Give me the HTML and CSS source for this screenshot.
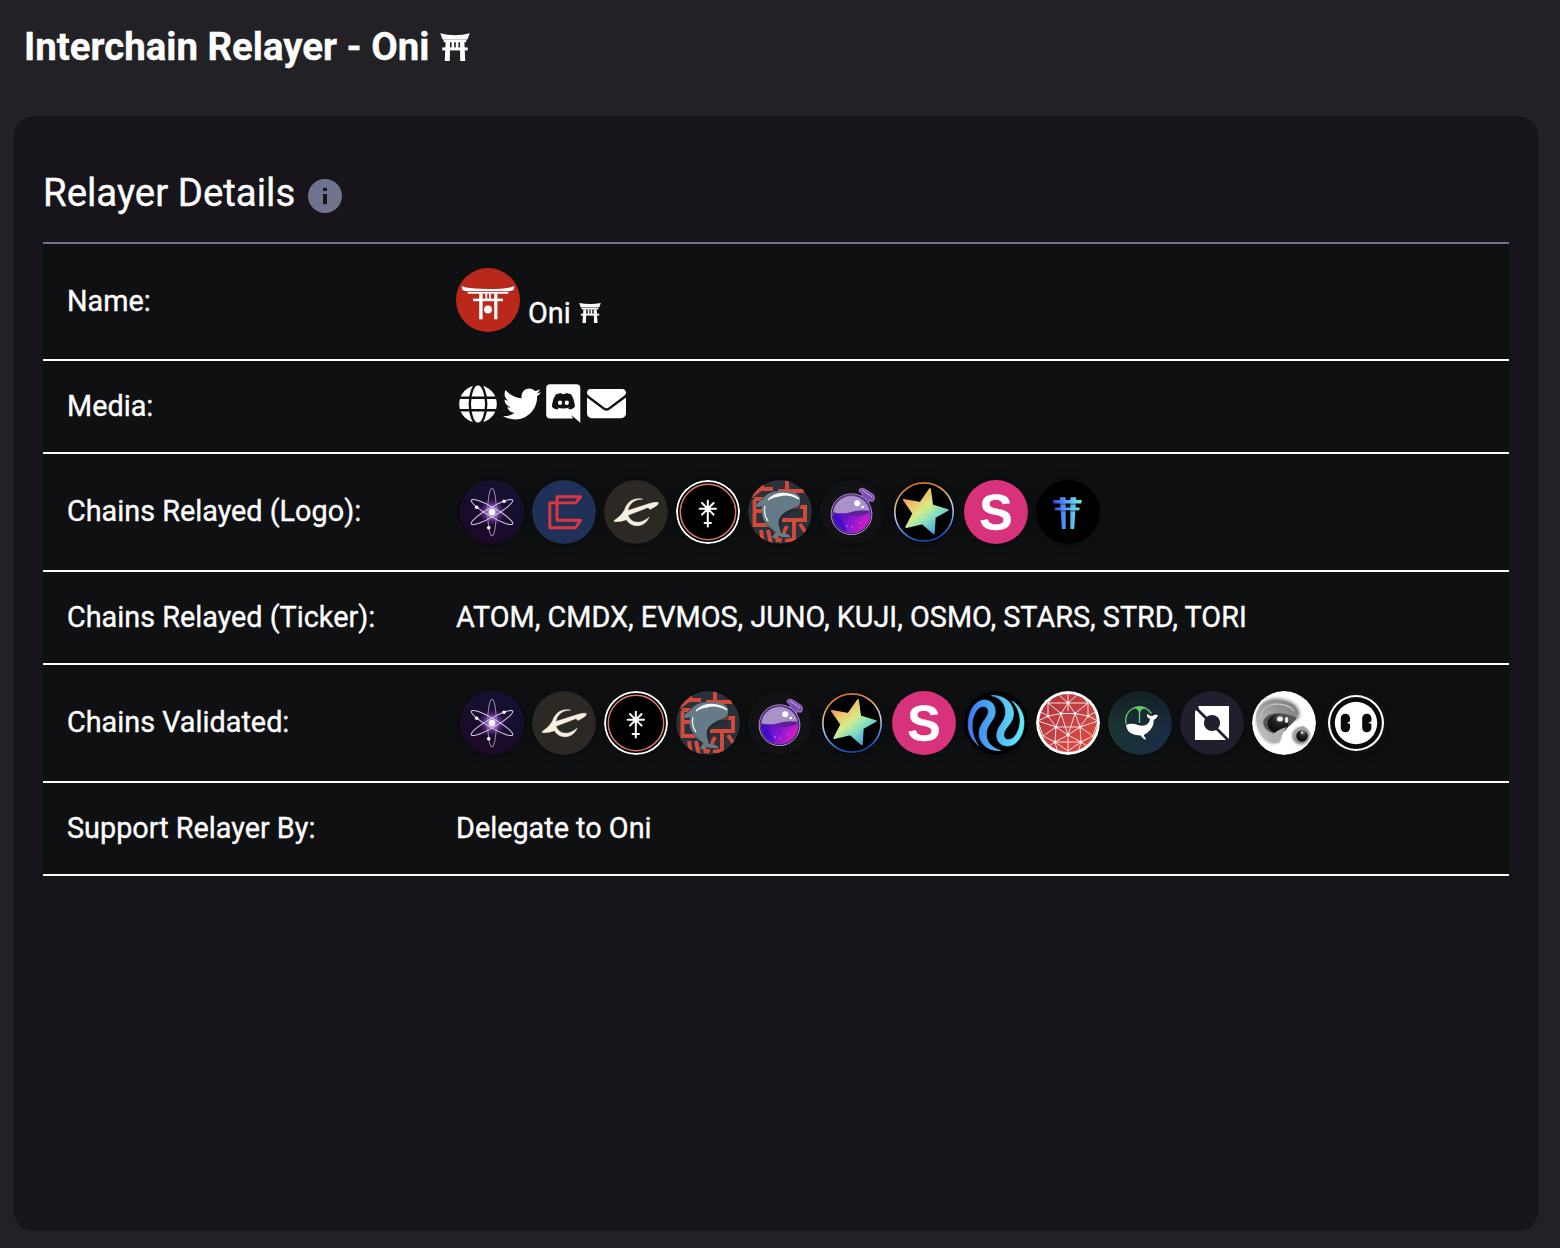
FILE: index.html
```html
<!DOCTYPE html>
<html lang="en">
<head>
<meta charset="utf-8">
<title>Interchain Relayer - Oni</title>
<link rel="stylesheet" href="styles.css">
</head>
<body>
<svg class="defs" aria-hidden="true">
  <defs>
    <radialGradient id="atomGlow"><stop offset="0" stop-color="#fff"/><stop offset=".18" stop-color="#e9b8ff"/><stop offset=".45" stop-color="#a052cf" stop-opacity=".7"/><stop offset="1" stop-color="#5a2090" stop-opacity="0"/></radialGradient>
    <linearGradient id="atomBg" x1=".8" y1="0" x2=".2" y2="1"><stop offset="0" stop-color="#131232"/><stop offset="1" stop-color="#1e0826"/></linearGradient>
    <linearGradient id="potion" x1="0" y1="0" x2="1" y2=".3"><stop offset="0" stop-color="#3b0bb5"/><stop offset=".5" stop-color="#7a17d0"/><stop offset="1" stop-color="#e01bc4"/></linearGradient>
    <linearGradient id="starFill" x1="0" y1="0" x2=".8" y2="1"><stop offset="0" stop-color="#ee6a7c"/><stop offset=".28" stop-color="#f3bd62"/><stop offset=".5" stop-color="#d5ec8b"/><stop offset=".7" stop-color="#84dfc0"/><stop offset="1" stop-color="#398fea"/></linearGradient>
    <linearGradient id="starRing" x1=".4" y1="0" x2=".6" y2="1"><stop offset="0" stop-color="#d26b2c"/><stop offset=".25" stop-color="#d8a96a"/><stop offset=".5" stop-color="#b9c7ee"/><stop offset=".75" stop-color="#4f8be0"/><stop offset="1" stop-color="#143d9c"/></linearGradient>
    <linearGradient id="toriFill" gradientUnits="userSpaceOnUse" x1="17" y1="24" x2="46" y2="24"><stop offset="0" stop-color="#4636ef"/><stop offset=".35" stop-color="#4b8ef7"/><stop offset=".7" stop-color="#62c4e8"/><stop offset="1" stop-color="#83edc7"/></linearGradient>
    <linearGradient id="injFill" x1="0" y1="0" x2="1" y2="0"><stop offset="0" stop-color="#3a7bf2"/><stop offset="1" stop-color="#63ecf8"/></linearGradient>
    <linearGradient id="gridFill" x1="0" y1="0" x2="1" y2="1"><stop offset="0" stop-color="#a92b33"/><stop offset=".5" stop-color="#c44448"/><stop offset="1" stop-color="#ea4b36"/></linearGradient>
    <linearGradient id="whaleBg" x1="0" y1=".3" x2="1" y2=".8"><stop offset="0" stop-color="#1b3630"/><stop offset="1" stop-color="#182b46"/></linearGradient>
    <linearGradient id="whaleShade" x1="0" y1="0" x2="0" y2="1"><stop offset="0" stop-color="#121a20" stop-opacity=".8"/><stop offset=".6" stop-color="#121a20" stop-opacity="0"/></linearGradient>
    <radialGradient id="pearl" cx=".6" cy=".2" r=".8"><stop offset="0" stop-color="#777"/><stop offset=".4" stop-color="#222"/><stop offset="1" stop-color="#080808"/></radialGradient>
    <linearGradient id="shell" x1="1" y1="0" x2="0" y2="1"><stop offset="0" stop-color="#777"/><stop offset="1" stop-color="#c9c9c9"/></linearGradient>
    <filter id="soft"><feGaussianBlur stdDeviation="1.6"/></filter>
    <clipPath id="disc"><circle cx="32" cy="32" r="32"/></clipPath>
    <clipPath id="gridDisc"><circle cx="32" cy="32" r="29"/></clipPath>
    <clipPath id="flaskDisc"><circle cx="31.5" cy="34.2" r="18.3"/></clipPath>
  </defs>

  <symbol id="torii" viewBox="0 0 30 28">
    <g fill="#fff">
      <path d="M.2.2Q15 4.2 29.8.2L27.4 6.6H2.6z"/>
      <path d="M3.4 6.4H26.6L26 9.2H4z"/>
      <path d="M5.6 9H10L9.8 28H4.8z"/><path d="M24.4 9H20L20.2 28H25.2z"/>
      <path d="M2.3 14.4H27.7V17.4H2.3z"/>
      <path d="M11.6 9H14.2V15H11.6z"/><path d="M15.8 9H18.4V15H15.8z"/>
    </g>
  </symbol>
  <symbol id="torii-sm" viewBox="0 0 22 20">
    <g fill="#fff">
      <path d="M.2 0Q11 2 21.8 0L20.2 4.4H1.8z"/>
      <path d="M2.6 4.9H19.4L19 6.6H3z"/>
      <path d="M4.4 6.4H7.3L7 20H3.4z"/><path d="M17.6 6.4H14.7L15 20H18.6z"/>
      <path d="M1.8 10.7H20.2V12.6H1.8z"/>
      <path d="M8.7 6.4H10.4V11H8.7z"/><path d="M11.6 6.4H13.3V11H11.6z"/>
    </g>
  </symbol>

  <symbol id="oni" viewBox="0 0 64 64">
    <circle cx="32" cy="32" r="32" fill="#b9281b"/>
    <g fill="#fff">
      <path d="M5.7 18Q7 18.8 9 19.3Q17 21 32 21T55 19.3Q57 18.8 58.3 18L57.5 22Q56 23 53 23.2H11Q8 23 6.5 22z"/>
      <path d="M11.5 24H52.5L52 25.8H12z"/>
      <path d="M17 30.6H47V33.2H17z"/>
      <path d="M23.2 25.5H26.6V51.3H23.2z"/><path d="M38.2 25.5H41.4V51.3H38.2z"/>
      <path d="M29.4 25.5H31.2V31H29.4z"/><path d="M33 25.5H34.8V31H33z"/>
      <circle cx="32" cy="41.5" r="3.9"/>
    </g>
  </symbol>

  <symbol id="atom" viewBox="0 0 64 64">
    <circle cx="32" cy="32" r="32" fill="url(#atomBg)"/>
    <circle cx="32" cy="32" r="14" fill="url(#atomGlow)"/>
    <g fill="none" stroke="#cfc6e6" stroke-width="1.1">
      <ellipse cx="32" cy="32" rx="4.3" ry="23.8" stroke="#8b80a5"/>
      <ellipse cx="32" cy="32" rx="4.5" ry="23.8" transform="rotate(60 32 32)"/>
      <ellipse cx="32" cy="32" rx="4.5" ry="23.8" transform="rotate(-60 32 32)"/>
    </g>
    <g fill="#fff"><circle cx="32" cy="32" r="3.1"/><circle cx="44" cy="21.2" r="1.8"/><circle cx="16.7" cy="27.3" r="1.8"/><circle cx="28.7" cy="47.8" r="1.8"/></g>
  </symbol>

  <symbol id="cmdx" viewBox="0 0 64 64">
    <circle cx="32" cy="32" r="32" fill="#1f3158"/>
    <path d="M25 16.8H48.6L43.6 22.9H17.8V47.8H43.6L48.6 40.2H25Z" fill="none" stroke="#dd3541" stroke-width="2.9" stroke-linejoin="round"/>
  </symbol>

  <symbol id="evmos" viewBox="0 0 64 64">
    <circle cx="32" cy="32" r="32" fill="#2c2824"/>
    <path fill="#f8efe3" stroke="#f8efe3" stroke-width=".5" d="M10 40.7C14 38 17.5 35 20.5 30C23 22 29.5 17.2 38.5 19.2Q36.5 19 34 19.6C28.5 21.2 25 25 23.8 30.5L45.5 23.6Q52 21.7 54.3 22.6Q54.8 24.8 50.5 27L46 29.5L44 27.5L24 35.2C26.5 42.5 35.5 45.5 45 37.2C42 45.5 31 49 24.2 42Q23 40.4 22.2 39.8Q16.5 42 10.5 41.6Z"/>
  </symbol>

  <symbol id="juno" viewBox="0 0 64 64">
    <circle cx="32" cy="32" r="31" fill="#000" stroke="#fff" stroke-width="2"/>
    <circle cx="32" cy="32" r="27.7" fill="none" stroke="#d8776f" stroke-width="1.5"/>
    <path d="M31.8 20.7V46.4M23.6 28.8H40M26 23 37.6 34.6M37.6 23 26 34.6M28.6 43H35" stroke="#fff" stroke-width="2" stroke-linecap="round"/>
  </symbol>

  <symbol id="kuji" viewBox="0 0 64 64">
    <g clip-path="url(#disc)">
      <path fill="#2a3138" d="M0 0h64v64H0z"/>
      <g fill="none" stroke="#d34a3d" stroke-width="3.9">
        <path d="M2 17 13 9M14 4v5h11M6 19H22M6.5 20v25H27V37M7 31H15M39 0v10M30 11H56M36 27H57V40H34M46 40V60H37M39 46 31 62M52 44 60 56M3 61 6 51M13 50l2 14M20 50l3 14M27 50l3 12"/>
      </g>
      <path fill="#202a31" opacity=".65" d="M10 26C12 16 23 11 36 12Q49 13 53 24L52 30Q40 33 35 38Q31 43 35 53L43 58Q32 61 27 55Q14 44 14 27z"/>
      <path fill="#667b88" d="M8 26Q9 22 14 20Q19 11 32 11Q50 10 52 18Q53 26 48 27Q40 30 36 33Q29 38 31 46L33 53Q40 53 43 57Q37 58 31 56Q27 60 24 57L28 52Q20 48 17 42Q12 34 14 26Q10 28 8 26Z"/>
      <path d="M20 20Q28 11 41 14Q47 15 51 19Q40 13 31 16Q24 17 20 20Z" fill="#fff" stroke="#fff" stroke-width="1.2"/>
      <path d="M17 26Q15 34 20 41" fill="none" stroke="#e0e6e8" stroke-width="1.4"/>
      <path d="M25 50 18 42" stroke="#495c68" stroke-width="1"/>
    </g>
  </symbol>

  <symbol id="osmo" viewBox="0 0 64 64">
    <circle cx="32" cy="32" r="32" fill="#111214"/>
    <path fill="#7851ae" stroke="#a66bd0" stroke-width="1.1" d="M41 18 42.6 14Q37.6 11 39.8 9.3Q42 7 46 10L52.5 14.2Q55.5 17 53.5 20.5Q52 22 49.5 20L47.5 25Z"/>
    <path d="M42 10 52 17" stroke="#cfacee" stroke-width="1"/>
    <circle cx="31.5" cy="34.2" r="20.4" fill="#31155c" stroke="#c9a5e2" stroke-width=".9"/>
    <circle cx="31.5" cy="34.2" r="18.7" fill="#a992c7" stroke="#7740ae" stroke-width="1"/>
    <g clip-path="url(#flaskDisc)"><path fill="#5b219a" d="M13 32Q22 35 31 32T51 31V54H13z"/><path fill="url(#potion)" d="M12 35Q22 32 30 35T52 32V55H12z"/><path fill="#2a0bd0" opacity=".6" d="M12 36Q24 36 27 54H12z"/></g>
    <g fill="#fff"><circle cx="37.2" cy="23.2" r="3"/><circle cx="42.7" cy="27" r="1.3"/></g>
    <g fill="#b751e0"><circle cx="27" cy="46" r="1.1"/><circle cx="32" cy="47" r="1"/><circle cx="40" cy="43" r=".9"/><circle cx="36" cy="41" r=".7"/></g>
  </symbol>

  <symbol id="stars" viewBox="0 0 64 64">
    <circle cx="32" cy="32" r="31" fill="#000"/>
    <circle cx="32" cy="32" r="29.2" fill="none" stroke="url(#starRing)" stroke-width="1.7"/>
    <path fill="url(#starFill)" stroke="url(#starFill)" stroke-width="1.8" stroke-linejoin="round" d="M38 9 40.2 25.3 55.8 30 42.8 37.3 41.8 53.3 30.3 43.3 14.3 47 21.3 33.5 11.8 19.8 28.4 22.8Z"/>
  </symbol>

  <symbol id="tori" viewBox="0 0 64 64">
    <circle cx="32" cy="32" r="32" fill="#000"/>
    <g fill="url(#toriFill)"><path d="M23.8 17.3H29.6V49H25.9Z"/><path d="M34.4 17.3H40.2L38.2 49H34.4Z"/><path d="M16.7 20H46L45 23.4H17.8Z"/><path d="M19 27.5H43.5V30.3H19Z"/></g>
    <path d="M23.8 24.2H29.6M34.4 24.2H40M24.4 31H29.6M34.4 31H39.6" stroke="#163c75" stroke-width=".8"/>
  </symbol>

  <symbol id="inj" viewBox="0 0 64 64">
    <circle cx="32" cy="32" r="32" fill="#000"/>
    <path fill="url(#injFill)" stroke="url(#injFill)" stroke-width=".7" d="M14.5 54.5C6.5 48 3 39 4.5 29C6 17 12.5 9 20.5 9C29 9 33 17 30.5 25C28 32 21.5 35 22.5 45C23 51.5 28 57 36.5 59.5C25 60.5 15.5 53.5 15 43C14.8 32 25 26.5 24.3 20C23.6 14.5 17 14 13 19C6.5 27 6 43 14.5 54.5Z M27.5 4.6C39 3.8 49 11 49.5 22C49.8 33 39 37 39.8 44.5C40.5 50 47 50 51 45C58 36 58.5 21 48 10C57 15.5 61 25 59.8 35C58.5 47 51.5 55 43.5 55C35 55 31 48 33.5 39.5C36 32.5 42.5 29 41.5 19C40.5 12 36 6.5 27.5 4.6Z"/>
  </symbol>

  <symbol id="mesh" viewBox="0 0 64 64">
    <circle cx="32" cy="32" r="32" fill="#fff"/>
    <g clip-path="url(#gridDisc)">
      <path fill="url(#gridFill)" d="M0 0h64v64H0z"/>
      <path fill="none" stroke="#ffe6e3" stroke-width=".95" d="M32 2V20M32 44V62M12 12 32 12 52 12M12 12 20 3M52 12 44 3M22 3 32 12 42 3M12 12V25L25 22.5 12 12M52 12V25L39 22.5 52 12M25 22.5 32 12 39 22.5ZM2 30 12 25 20 36 32 44 44 36 52 25 62 30M25 22.5 20 36H44L39 22.5M25 22.5 32 44 39 22.5M2 30 20 36 7 45 2 30M62 30 44 36 57 45 62 30M20 36 19 51 32 44 45 51 44 36M7 45 19 51 32 60 45 51 57 45M19 51H45M10 57 19 51 22 62M54 57 45 51 42 62M3 20 12 25M61 20 52 25"/>
      <g fill="#fff"><circle cx="12" cy="25" r="1.5"/><circle cx="25" cy="22.5" r="1.5"/><circle cx="39" cy="22.5" r="1.5"/><circle cx="52" cy="25" r="1.5"/><circle cx="20" cy="36" r="1.5"/><circle cx="44" cy="36" r="1.5"/><circle cx="32" cy="44" r="1.5"/><circle cx="19" cy="51" r="1.5"/><circle cx="45" cy="51" r="1.5"/><circle cx="32" cy="12" r="1.4"/></g>
    </g>
  </symbol>

  <symbol id="whale" viewBox="0 0 64 64">
    <circle cx="32" cy="32" r="32" fill="url(#whaleBg)"/><circle cx="32" cy="32" r="32" fill="url(#whaleShade)"/>
    <path fill="none" stroke="#62c86c" stroke-width="1.4" d="M18 33Q16 23 24 18Q35 12 43.5 22.5M31.5 17V32"/><path fill="#62c86c" d="M25 17Q32 14 39 18Q33 17 32 22H31Q30 17 25 17Z"/>
    <path fill="#fff" d="M18 34Q23 31.5 30 34Q40 37 42.2 28Q38.5 27 39 22.8Q42 25.5 44.5 25Q46 23 50 24Q48.5 28 45.7 28.8Q46 37 39 42Q35.5 43.5 36 45Q38 46.5 37.8 49Q34.5 48 32.8 44.6Q19 44 18 34Z"/>
  </symbol>

  <symbol id="quasar" viewBox="0 0 64 64">
    <circle cx="32" cy="32" r="32" fill="#211f2e"/>
    <path fill="#fff" d="M15 15H49V49H15Z"/>
    <path d="M14 17 48 51" stroke="#211f2e" stroke-width="2.6" transform="translate(1 -1)"/>
    <circle cx="32" cy="32" r="8.1" fill="#211f2e"/><path fill="#211f2e" d="M14 14H18L19 18L15 20H14Z"/>
  </symbol>

  <symbol id="oyster" viewBox="0 0 64 64">
    <g clip-path="url(#disc)">
      <path fill="#fff" d="M0 0h64v64H0z"/>
      <path d="M5 24Q8 7 25 7Q46 9 48 22Q49 29 38 31Q29 35 28 50Q19 57 10 45Q3 35 5 24" fill="#999" filter="url(#soft)"/>
      <path d="M4 25Q7 9 24 9Q43 10 46 21Q47 27 37 29Q27 35 27 51Q19 54 11 45Q4 37 4 25" fill="url(#shell)"/>
      <path d="M8 28Q10 14 24 13Q37 13 42 20" fill="none" stroke="#c0c0c0" stroke-width="1.4"/>
      <path d="M11 31Q14 22 27 22Q38 23 45 27Q34 41 23 43Q12 40 11 31" fill="#555"/>
      <ellipse cx="26" cy="32.5" rx="10.5" ry="9.5" fill="url(#pearl)"/><path d="M17 49Q22 39 35 36Q30 42 27 52Z" fill="#b0b0b0"/>
      <g fill="#eee"><ellipse cx="28" cy="28" rx="3" ry="2.5"/><ellipse cx="34.5" cy="29" rx="1.7" ry="3"/></g>
      <ellipse cx="49" cy="45" rx="8.5" ry="8.5" fill="#777" filter="url(#soft)"/><path d="M42 43Q44 36 51 35Q59 39 57 46Q54 51 49 51Q42 49 42 43" fill="#a2a2a2"/>
      <circle cx="50" cy="45" r="5.8" fill="url(#pearl)"/><circle cx="50" cy="41.5" r="1.2" fill="#ddd"/>
    </g>
  </symbol>

  <symbol id="face" viewBox="0 0 64 64">
    <circle cx="32" cy="32" r="28" fill="#fff"/><circle cx="32" cy="32" r="25.9" fill="#090a0a"/><circle cx="32" cy="32" r="21.2" fill="#fff"/>
    <rect x="16.8" y="22.7" width="9.2" height="18.6" rx="4.5" fill="#090a0a"/><rect x="38.2" y="22.7" width="9.2" height="18.6" rx="4.5" fill="#090a0a"/>
    <path d="M23 32 26.4 30V33ZM44.3 32 47.8 30V33Z" fill="#fff"/>
  </symbol>
</svg>

<header class="page-title"><h1>Interchain Relayer - Oni</h1><svg class="title-torii" role="img" aria-label="shrine"><use href="#torii"/></svg></header>

<main class="card">
  <div class="card-head">
    <h2>Relayer Details</h2>
    <svg class="info" viewBox="0 0 34 34"><circle cx="17" cy="17" r="17" fill="#70738d"/><path fill="#17141b" d="M15 8.8h4v3.2h-4zM15 15h4v10.2h-4z"/></svg>
  </div>
  <dl class="details">
    <div class="row tall first"><dt>Name:</dt><dd class="name"><svg class="avatar"><use href="#oni"/></svg><span>Oni</span><svg class="name-torii"><use href="#torii-sm"/></svg></dd></div>
    <div class="row"><dt>Media:</dt><dd class="media">
      <svg width="38" height="38" viewBox="0 0 38 38"><circle cx="19" cy="19" r="18.8" fill="#fff"/><g fill="none" stroke="#0f1012" stroke-width="2.4"><ellipse cx="19" cy="19" rx="8.2" ry="20"/><path d="M0 12.7H38M0 25.3H38"/></g></svg>
      <svg width="38" height="38" viewBox="0 0 512 512"><path fill="#fff" d="M459.37 151.716c.325 4.548.325 9.097.325 13.645 0 138.72-105.583 298.558-298.558 298.558-59.452 0-114.68-17.219-161.137-47.106 8.447.974 16.568 1.299 25.34 1.299 49.055 0 94.213-16.568 130.274-44.832-46.132-.975-84.792-31.188-98.112-72.772 6.498.974 12.995 1.624 19.818 1.624 9.421 0 18.843-1.3 27.614-3.573-48.081-9.747-84.143-51.98-84.143-102.985v-1.299c13.969 7.797 30.214 12.67 47.431 13.319-28.264-18.843-46.781-51.005-46.781-87.391 0-19.492 5.197-37.36 14.294-52.954 51.655 63.675 129.3 105.258 216.365 109.807-1.624-7.797-2.599-15.918-2.599-24.04 0-57.828 46.782-104.934 104.934-104.934 30.213 0 57.502 12.67 76.67 33.137 23.715-4.548 46.456-13.32 66.599-25.34-7.798 24.366-24.366 44.833-46.132 57.827 21.117-2.273 41.584-8.122 60.426-16.243-14.292 20.791-32.161 39.308-52.628 54.253z"/></svg>
      <svg width="35" height="39" viewBox="0 0 35 39"><path fill="#fff" d="M4.2.2H30.3Q34.3.2 34.3 4.2V38.8L25.5 31.2 27 34.6H4.2Q.2 34.6.2 30.6V4.2Q.2.2 4.2.2Z"/><path fill="#111214" d="M10 10.2 15 9 15.8 9.9H19L20 9 25 10.3Q28.8 16 28.8 23Q26.7 25.2 23.2 25.6L22.1 24Q23.4 23.5 24 22.9Q17.3 26 10.5 22.9L12.6 24.1 11.6 25.6Q8 25.2 6 23Q6.2 15.7 10 10.2Z"/><ellipse cx="14" cy="18.7" rx="2.1" ry="2.3" fill="#fff"/><ellipse cx="20.8" cy="18.7" rx="2.1" ry="2.3" fill="#fff"/></svg>
      <svg width="39" height="39" viewBox="0 0 512 512"><path fill="#fff" d="M48 64C21.5 64 0 85.5 0 112c0 15.1 7.1 29.3 19.2 38.4L236.8 313.6c11.4 8.5 27 8.5 38.4 0L492.8 150.4c12.1-9.1 19.2-23.3 19.2-38.4c0-26.5-21.5-48-48-48H48zM0 176V384c0 35.3 28.7 64 64 64H448c35.3 0 64-28.7 64-64V176L294.4 339.2c-22.8 17.1-54 17.1-76.8 0L0 176z"/></svg>
    </dd></div>
    <div class="row tall"><dt>Chains Relayed (Logo):</dt><dd class="logos">
      <svg><use href="#atom"/></svg><svg><use href="#cmdx"/></svg><svg><use href="#evmos"/></svg><svg><use href="#juno"/></svg><svg><use href="#kuji"/></svg><svg><use href="#osmo"/></svg><svg><use href="#stars"/></svg><span class="coin-letter">S</span><svg><use href="#tori"/></svg>
    </dd></div>
    <div class="row"><dt>Chains Relayed (Ticker):</dt><dd class="tickers">ATOM, CMDX, EVMOS, JUNO, KUJI, OSMO, STARS, STRD, TORI</dd></div>
    <div class="row tall"><dt>Chains Validated:</dt><dd class="logos">
      <svg><use href="#atom"/></svg><svg><use href="#evmos"/></svg><svg><use href="#juno"/></svg><svg><use href="#kuji"/></svg><svg><use href="#osmo"/></svg><svg><use href="#stars"/></svg><span class="coin-letter">S</span><svg><use href="#inj"/></svg><svg><use href="#mesh"/></svg><svg><use href="#whale"/></svg><svg><use href="#quasar"/></svg><svg><use href="#oyster"/></svg><svg><use href="#face"/></svg>
    </dd></div>
    <div class="row"><dt>Support Relayer By:</dt><dd class="support">Delegate to Oni</dd></div>
  </dl>
</main>
</body>
</html>
```
FILE: styles.css
```css
* { box-sizing: border-box; }
body {
  margin: 0;
  height: 1248px;
  padding: 0 22px 17px 14px;
  display: flex;
  flex-direction: column;
  background: #222125;
  color: #fff;
  font-family: Roboto, "Liberation Sans", sans-serif;
  -webkit-text-stroke: .35px #fff;
  overflow: hidden;
}
svg { display: block; flex: none; }
.defs { position: absolute; width: 0; height: 0; }
h1, h2, dl, dd { margin: 0; }
.page-title {
  height: 116px;
  flex: none;
  padding: 24px 0 0 10px;
  display: flex;
  align-items: flex-start;
  gap: 11px;
}
h1 { font-size: 38.4px; line-height: 46px; font-weight: 700; white-space: nowrap; }
.title-torii { width: 30px; height: 28px; margin-top: 9px; }
.card {
  flex: 1;
  padding: 0 29px;
  border-radius: 20px;
  background: #17141b;
}
.card-head {
  height: 126px;
  padding-top: 54px;
  display: flex;
  align-items: flex-start;
  gap: 13px;
}
h2 { font-size: 38.4px; line-height: 46px; font-weight: 400; white-space: nowrap; }
.info { width: 34px; height: 34px; margin-top: 9px; }
.details { border-top: 2px solid #70738d; background: #0f1012; }
.row {
  height: 93px;
  padding-left: 24px;
  border-bottom: 2px solid #fff;
  display: grid;
  grid-template-columns: 389px 1fr;
  align-items: center;
  font-size: 28.8px;
  line-height: 34px;
  white-space: nowrap;
}
.row.tall { height: 118px; }
.row.tall.first { height: 117px; }
dt, .tickers, .support { padding-bottom: 2px; }
.name { display: flex; align-items: center; height: 64px; margin-bottom: 3px; }
.avatar { width: 64px; height: 64px; }
.name span { margin: 26px 8px 0 8px; }
.name-torii { width: 22px; height: 20px; margin-top: 26px; }
.media { display: flex; align-items: center; gap: 5.7px; padding: 0 0 6px 3px; }
.logos { display: flex; gap: 8px; padding-left: 4px; }
.logos > * { width: 64px; height: 64px; border-radius: 50%; box-shadow: 0 0 12px rgba(0, 0, 0, .35); }
.coin-letter {
  background: #d7327b;
  font: 700 50px/66px "Liberation Sans", sans-serif;
  text-align: center;
}
```
